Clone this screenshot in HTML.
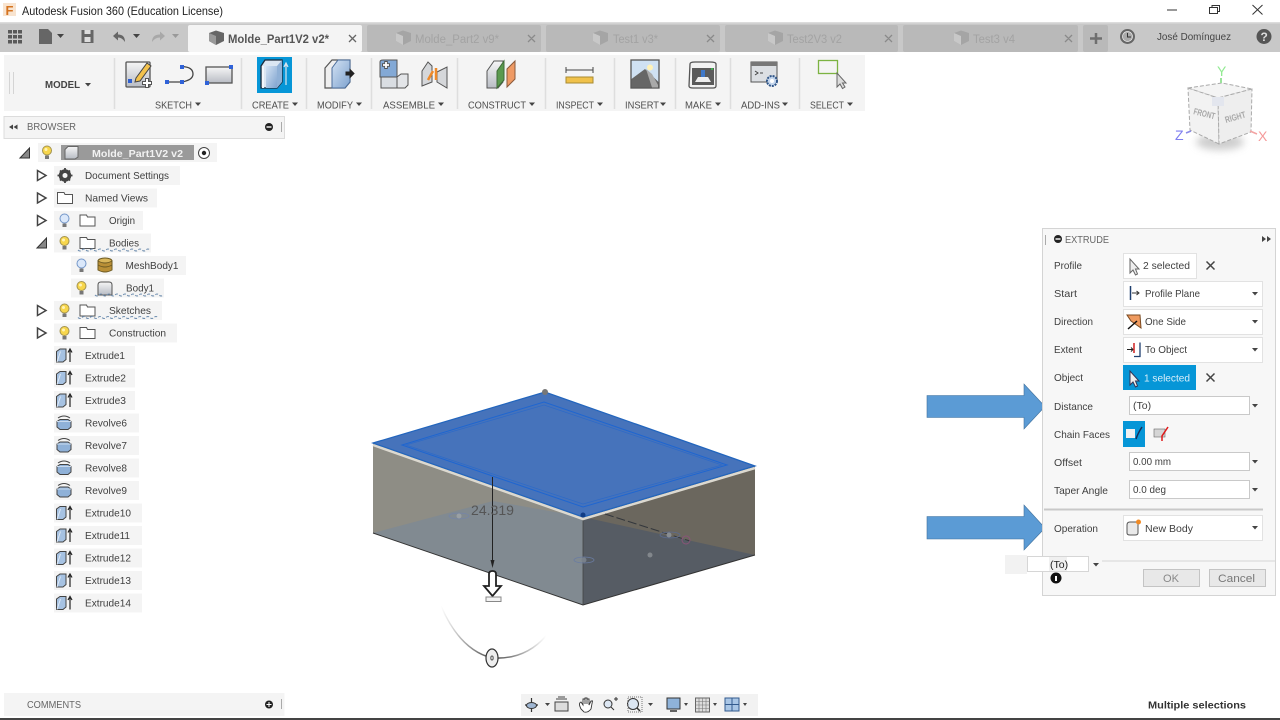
<!DOCTYPE html>
<html lang="en"><head><meta charset="utf-8"><title>Autodesk Fusion 360</title>
<style>
html,body{margin:0;padding:0;background:#fff;width:1280px;height:720px;overflow:hidden}
svg{display:block;position:absolute;left:0;top:0;filter:blur(.35px)}
text{font-family:"Liberation Sans",sans-serif;font-size:10.5px;fill:#3f3f3f}
.r{fill:#f4f4f4}
.t{fill:#a3a3a3;font-size:11.5px}
.x{stroke:#8a8a8a;stroke-width:1.3;fill:none}
.rl{font-size:10.5px;fill:#4d4d4d}
.sep{stroke:#dedede;stroke-width:1.5}
.car{fill:#444}
.f{fill:#fff;stroke:#e2e2e2}
.exp{fill:#fff;stroke:#444;stroke-width:1.5}
.sq{fill:none;stroke:#6c8cae;stroke-width:1.1;stroke-dasharray:3 1.5}
.ib{fill:#fff;stroke:#c9c9c9}
</style></head><body>
<svg width="1280" height="720" viewBox="0 0 1280 720" xmlns="http://www.w3.org/2000/svg">
<defs>
<linearGradient id="bl" x1="0" y1="0" x2="1" y2="1"><stop offset="0" stop-color="#d3e2f3"/><stop offset="1" stop-color="#7fa3cf"/></linearGradient>
<linearGradient id="gr" x1="0" y1="0" x2="0" y2="1"><stop offset="0" stop-color="#f6f6f6"/><stop offset="1" stop-color="#b8bcc4"/></linearGradient>
<linearGradient id="arc" x1="0" y1="0" x2="1" y2="0"><stop offset="0" stop-color="#fff"/><stop offset=".5" stop-color="#444"/><stop offset="1" stop-color="#fff"/></linearGradient>
<filter id="sh" x="-30%" y="-60%" width="160%" height="220%"><feGaussianBlur stdDeviation="4"/></filter>
<g id="by"><circle cx="0" cy="-2.500" r="4.500" fill="#f7d64c" stroke="#a39350"/><circle cx="-1" cy="-3.500" r="1.500" fill="#fff3b5"/><rect x="-2" y="2.500" width="4" height="3.500" fill="#777"/></g>
<g id="bb"><circle cx="0" cy="-2.500" r="4.500" fill="#dbe8fa" stroke="#7396c8"/><rect x="-2" y="2.500" width="4" height="3.500" fill="#777"/></g>
<g id="fo"><path d="M-7.500 -5.500H-1L0 -3.500H7.500V5.500H-7.500Z" fill="#fff" stroke="#555"/></g>
<g id="ex"><path d="M-7.500 -4L-4 -6.500H2V4L-1 6.500H-7.500Z" fill="#a6c2e2" stroke="#444"/><path d="M-3.500 -4L-7 6.500" stroke="#dfe9f5" fill="none"/><path d="M6 6.500V-5M4 -3L6 -6.500L8 -3" stroke="#222" stroke-width="1.200" fill="none"/></g>
<g id="re"><path d="M-7 -1.500L-4 -3.500H4L7 -1.500V4L4 6.500H-4L-7 4Z" fill="#8fb1d8" stroke="#444"/><path d="M-7 -1.500H7" stroke="#c9daee"/><path d="M-6 -5Q0 -9 6 -5" stroke="#444" fill="none"/></g>
</defs>

<!-- title bar -->
<rect x="3" y="3" width="13" height="13" fill="#f8e4d0"/>
<text x="5.500" y="15" style="font-size:13px;font-weight:bold;fill:#d5731f">F</text>
<text x="22" y="15" textLength="201" lengthAdjust="spacingAndGlyphs" style="font-size:12px;fill:#222">Autodesk Fusion 360 (Education License)</text>
<path d="M1167 10H1177" stroke="#333" stroke-width="1"/>
<path d="M1209.500 7.500H1217.500V13.500H1209.500ZM1212 7.500V5.500H1219.500V11.500H1217.500" fill="none" stroke="#333"/>
<path d="M1252.500 5L1262.500 14.500M1262.500 5L1252.500 14.500" stroke="#333" stroke-width="1"/>

<!-- tab bar -->
<rect x="0" y="22" width="1280" height="30" fill="#c8c8c8"/>
<rect x="0" y="22" width="1280" height="1.500" fill="#dcdcdc"/>
<rect x="188" y="25" width="174" height="27" rx="2" fill="#f4f4f4"/>
<rect x="367" y="25" width="174" height="27" rx="2" fill="#b9b9b9"/>
<rect x="546" y="25" width="174" height="27" rx="2" fill="#b9b9b9"/>
<rect x="725" y="25" width="173" height="27" rx="2" fill="#b9b9b9"/>
<rect x="903" y="25" width="175" height="27" rx="2" fill="#b9b9b9"/>
<rect x="1083" y="25" width="25" height="27" rx="2" fill="#b9b9b9"/>
<path d="M1090 38.500H1102M1096 33V44" stroke="#6f6f6f" stroke-width="2.500"/>
<g fill="#595959"><rect x="8" y="30" width="4" height="3.500"/><rect x="13" y="30" width="4" height="3.500"/><rect x="18" y="30" width="4" height="3.500"/><rect x="8" y="35" width="4" height="3.500"/><rect x="13" y="35" width="4" height="3.500"/><rect x="18" y="35" width="4" height="3.500"/><rect x="8" y="40" width="4" height="3.500"/><rect x="13" y="40" width="4" height="3.500"/><rect x="18" y="40" width="4" height="3.500"/></g>
<path d="M39 29H48L52 33V44H39Z" fill="#666"/><path class="car" d="M57 34H64L60.500 38Z"/>
<path d="M81.500 30H93.500V43H81.500Z" fill="#666"/><rect x="84.500" y="30" width="6" height="4" fill="#ddd"/><rect x="84.500" y="37" width="6" height="5" fill="#ddd"/>
<path d="M113 36L118 31.500V34.500Q125 34.500 125 42Q122 37.500 118 37.500V40.500Z" fill="#666"/><path class="car" d="M133 34H140L136.500 38Z"/>
<path d="M165 36L160 31.500V34.500Q152 34.500 152 42Q155 37.500 160 37.500V40.500Z" fill="#a8a8a8"/><path d="M172 34H179L175.500 38Z" fill="#999"/>
<path d="M209 33L216 30.500L224 33V41L216 45L209 41Z" fill="#666"/><path d="M209 33L216 36V45L209 41Z" fill="#999"/>
<text x="228" y="43" textLength="101" lengthAdjust="spacingAndGlyphs" style="font-size:11.500px;font-weight:bold;fill:#555">Molde_Part1V2 v2*</text>
<path d="M349 35L356 42M356 35L349 42" stroke="#666" stroke-width="1.300"/>
<g fill="#a5a5a5"><path d="M396 33L403 30.500L411 33V41L403 45L396 41Z"/><path d="M593 33L600 30.500L608 33V41L600 45L593 41Z"/><path d="M768 33L775 30.500L783 33V41L775 45L768 41Z"/><path d="M954 33L961 30.500L969 33V41L961 45L954 41Z"/></g>
<g fill="#c8c8c8"><path d="M396 33L403 36V45L396 41Z"/><path d="M593 33L600 36V45L593 41Z"/><path d="M768 33L775 36V45L768 41Z"/><path d="M954 33L961 36V45L954 41Z"/></g>
<text class="t" x="415" y="43" textLength="84" lengthAdjust="spacingAndGlyphs">Molde_Part2 v9*</text>
<text class="t" x="613" y="43" textLength="45" lengthAdjust="spacingAndGlyphs">Test1 v3*</text>
<text class="t" x="787" y="43" textLength="55" lengthAdjust="spacingAndGlyphs">Test2V3 v2</text>
<text class="t" x="973" y="43" textLength="42" lengthAdjust="spacingAndGlyphs">Test3 v4</text>
<path class="x" d="M528 35L535 42M535 35L528 42M707 35L714 42M714 35L707 42M885 35L892 42M892 35L885 42M1065 35L1072 42M1072 35L1065 42"/>
<circle cx="1127.500" cy="36.500" r="7.500" fill="#666"/><circle cx="1127.500" cy="36.500" r="5" fill="#aaa" stroke="#eee" stroke-width=".7"/><path d="M1127.500 33V37H1131" stroke="#333" fill="none"/>
<text x="1157" y="40" textLength="74" lengthAdjust="spacingAndGlyphs" style="font-size:10.500px;fill:#444">José Domínguez</text>
<circle cx="1264" cy="36.500" r="7.500" fill="#555"/><text x="1260.500" y="41" style="font-size:12px;font-weight:bold;fill:#ddd">?</text>

<!-- ribbon -->
<rect x="4" y="55" width="861" height="56" fill="#f4f4f4"/>
<path d="M9.500 72V94M13.500 72V94" stroke="#d4d4d4"/>
<text x="45" y="88" textLength="35" lengthAdjust="spacingAndGlyphs" style="font-weight:bold;fill:#444;font-size:10.500px">MODEL</text><path class="car" d="M85 83H91L88 86.500Z"/>
<path class="sep" d="M114.500 58V109M241.500 58V109M306.500 58V109M371.500 58V109M457.500 58V109M545.500 58V109M614.500 58V109M675.500 58V109M730.500 58V109M799.500 58V109"/>
<text class="rl" x="155" y="108.500" textLength="37" lengthAdjust="spacingAndGlyphs">SKETCH</text>
<text class="rl" x="252" y="108.500" textLength="37" lengthAdjust="spacingAndGlyphs">CREATE</text>
<text class="rl" x="317" y="108.500" textLength="36" lengthAdjust="spacingAndGlyphs">MODIFY</text>
<text class="rl" x="383" y="108.500" textLength="52" lengthAdjust="spacingAndGlyphs">ASSEMBLE</text>
<text class="rl" x="468" y="108.500" textLength="58" lengthAdjust="spacingAndGlyphs">CONSTRUCT</text>
<text class="rl" x="556" y="108.500" textLength="38" lengthAdjust="spacingAndGlyphs">INSPECT</text>
<text class="rl" x="625" y="108.500" textLength="34" lengthAdjust="spacingAndGlyphs">INSERT</text>
<text class="rl" x="685" y="108.500" textLength="27" lengthAdjust="spacingAndGlyphs">MAKE</text>
<text class="rl" x="741" y="108.500" textLength="39" lengthAdjust="spacingAndGlyphs">ADD-INS</text>
<text class="rl" x="810" y="108.500" textLength="34" lengthAdjust="spacingAndGlyphs">SELECT</text>
<path class="car" d="M195 102.500H201L198 106ZM292 102.500H298L295 106ZM356 102.500H362L359 106ZM438 102.500H444L441 106ZM529 102.500H535L532 106ZM597 102.500H603L600 106ZM660 102.500H666L663 106ZM715 102.500H721L718 106ZM782 102.500H788L785 106ZM847 102.500H853L850 106Z"/>

<!-- sketch icons -->
<rect x="126" y="62" width="24" height="25" rx="1" fill="url(#gr)" stroke="#555" stroke-width="1.300"/>
<path d="M136 78L147 63L151 66L140 81L135 82Z" fill="#f3c24d" stroke="#444"/>
<rect x="128" y="79" width="4" height="4" fill="#2f5fd0"/>
<path d="M147 78V88M142 83H152" stroke="#555" stroke-width="4"/><path d="M147 79V87M143 83H151" stroke="#fff" stroke-width="2"/>
<path d="M167 82H182Q193 80 193 74Q193 67 182 66.500" fill="none" stroke="#444" stroke-width="1.300"/>
<g fill="#2f62d8"><rect x="165" y="80" width="4" height="4"/><rect x="180" y="80" width="4" height="4"/><rect x="180" y="65" width="4" height="4"/></g>
<rect x="206" y="67" width="26" height="16" fill="url(#gr)" stroke="#555" stroke-width="1.300"/>
<g fill="#2f62d8"><rect x="229" y="65" width="4" height="4"/><rect x="205" y="81" width="4" height="4"/></g>
<!-- create -->
<rect x="257" y="57" width="35" height="36" fill="#0696d7"/>
<path d="M261 66L265 60H282V82L277 88H261Z" fill="#dbe6f2" stroke="#1c2a3a" stroke-width="1.300"/>
<path d="M266 66H277V88H266Z" fill="url(#bl)"/>
<path d="M277 66L282 60V82L277 88Z" fill="#8fb0d6"/>
<path d="M263 66V88" stroke="#f2f6fb" stroke-width="2"/>
<path d="M286 85V64M284 67L286 63L288 67" stroke="#d9e4ee" stroke-width="1.200" fill="none"/>
<!-- modify -->
<path d="M325 68L332 60H350V82L345 88H325Z" fill="#efefef" stroke="#555" stroke-width="1.200"/>
<path d="M332 68L338 60H350V82L345 88H332Z" fill="url(#bl)" stroke="#4c6e9c" stroke-width="1"/>
<path d="M350 72V69.500L354 73.500L350 77.500V75H346V72Z" fill="#222" stroke="#222"/>
<!-- assemble -->
<path d="M380 77V62Q380 60 383 60H397V77Z" fill="#83a9d6" stroke="#555"/>
<path d="M381 77H397V88H381Z" fill="#d9dde2" stroke="#555"/><path d="M397 77L401 74H408V85L405 88H397Z" fill="#e3e5e8" stroke="#555"/>
<path d="M386 61V69M382 65H390" stroke="#555" stroke-width="3.500"/><path d="M386 62V68M383 65H389" stroke="#fff" stroke-width="1.800"/>
<path d="M422 86V71L428 62L432 66V82ZM437 72L447 67V88L437 82Z" fill="#d5d7da" stroke="#555"/><path d="M428 80L433 71M436 68V80" stroke="#ee8a2a" stroke-width="2.500"/>
<!-- construct -->
<path d="M487 71L494 61H503V82L498 88H487Z" fill="url(#gr)" stroke="#555"/>
<path d="M497 71L504 61V80L497 88Z" fill="#5b9a4f" stroke="#3f6b38"/>
<path d="M507 87V69L515 61V79Z" fill="#ef9a64" stroke="#8a5a3b"/>
<!-- inspect -->
<path d="M566 70H593M566 67V73M593 67V73" stroke="#444"/>
<rect x="566" y="77" width="27" height="6" fill="#f0c14a" stroke="#a88a32"/>
<!-- insert -->
<rect x="631" y="60" width="28" height="28" fill="#cfe1f3" stroke="#555" stroke-width="1.300"/>
<path d="M631.500 87.500V79L645 69L658.500 82V87.500Z" fill="#666"/><path d="M646 69L652 74L658 85V87.500H652Z" fill="#a9a9a9"/><circle cx="650" cy="67.500" r="3" fill="#fff2b8"/>
<!-- make -->
<path d="M690 64Q690 62 695 62H710Q716 62 716 64V86Q716 88 713 88H693Q689 88 689 86Z" fill="#f2f2f2" stroke="#555" stroke-width="1.300"/>
<rect x="692" y="68" width="22" height="17" fill="#5a5a5a"/><path d="M695 82L698 77H708L711 82Z" fill="#eee"/><rect x="701" y="70" width="4" height="7" fill="#3f78c8"/><rect x="711" y="68" width="2" height="2" fill="#3fb04f"/>
<!-- add-ins -->
<rect x="751" y="62" width="26" height="20" fill="#dcdfe3" stroke="#555"/><rect x="751" y="62" width="26" height="4" fill="#777"/>
<path d="M755 71L758 73L755 75M760 73H763" stroke="#444" fill="none"/>
<circle cx="772" cy="81" r="5" fill="#c5d7ee" stroke="#2f5588" stroke-width="2" stroke-dasharray="2 1"/><circle cx="772" cy="81" r="2" fill="#fff"/>
<!-- select -->
<rect x="818.500" y="60.500" width="19" height="13" fill="none" stroke="#7cb342" stroke-width="1.300"/>
<path d="M837 73V87L840 84L842.500 88.500L845 87L842.500 83H846Z" fill="#ddd" stroke="#666"/>

<!-- browser -->
<rect x="4" y="116.500" width="280.500" height="22" fill="#f4f4f4" stroke="#dcdcdc"/>
<path class="car" d="M9 127L13 124.500V129.500ZM13.500 127L17.500 124.500V129.500Z"/>
<text x="27" y="130" textLength="49" lengthAdjust="spacingAndGlyphs" style="fill:#666">BROWSER</text>
<circle cx="269" cy="127" r="4" fill="#222"/><rect x="266.500" y="126.300" width="5" height="1.400" fill="#fff"/>
<path d="M281.500 122V132" stroke="#aaa"/>

<g>
<rect class="r" x="38" y="143" width="179" height="19"/>
<rect class="r" x="54" y="166" width="126" height="19"/>
<rect class="r" x="54" y="188.500" width="103" height="19"/>
<rect class="r" x="54" y="211" width="89" height="19"/>
<rect class="r" x="54" y="233.500" width="97" height="19"/>
<rect class="r" x="71" y="256" width="115" height="19"/>
<rect class="r" x="71" y="278.500" width="93" height="19"/>
<rect class="r" x="54" y="301" width="108" height="19"/>
<rect class="r" x="54" y="323.500" width="123" height="19"/>
<rect class="r" x="54" y="346" width="81" height="19"/>
<rect class="r" x="54" y="368.500" width="81" height="19"/>
<rect class="r" x="54" y="391" width="81" height="19"/>
<rect class="r" x="54" y="413.500" width="85" height="19"/>
<rect class="r" x="54" y="436" width="85" height="19"/>
<rect class="r" x="54" y="458.500" width="85" height="19"/>
<rect class="r" x="54" y="481" width="85" height="19"/>
<rect class="r" x="54" y="503.500" width="88" height="19"/>
<rect class="r" x="54" y="526" width="88" height="19"/>
<rect class="r" x="54" y="548.500" width="88" height="19"/>
<rect class="r" x="54" y="571" width="88" height="19"/>
<rect class="r" x="54" y="593.500" width="88" height="19"/>
</g>
<!-- root -->
<path d="M20 158L29.500 148V158Z" fill="#888" stroke="#333"/>
<use href="#by" x="47" y="153"/>
<rect x="61" y="145" width="133" height="15" fill="#9a9a9a"/>
<path d="M65 149.500L68 146.500H78V157L75 159H65Z" fill="url(#gr)" stroke="#666"/>
<text x="92" y="157" textLength="91" lengthAdjust="spacingAndGlyphs" style="font-weight:bold;fill:#f2f2f2">Molde_Part1V2 v2</text>
<circle cx="204" cy="153" r="5.500" fill="#fff" stroke="#444"/><circle cx="204" cy="153" r="2.200" fill="#222"/>
<!-- expanders -->
<path class="exp" d="M37.500 170.500L46 175.500L37.500 180.500Z"/>
<path class="exp" d="M37.500 193L46 198L37.500 203Z"/>
<path class="exp" d="M37.500 215.500L46 220.500L37.500 225.500Z"/>
<path d="M37 248L46.500 238V248Z" fill="#888" stroke="#333"/>
<path class="exp" d="M37.500 305.500L46 310.500L37.500 315.500Z"/>
<path class="exp" d="M37.500 328L46 333L37.500 338Z"/>
<!-- icons -->
<circle cx="65" cy="175.500" r="4.500" fill="none" stroke="#444" stroke-width="3.500"/>
<path d="M65 168V183M57.500 175.500H72.500M60 170.500L70 180.500M70 170.500L60 180.500" stroke="#444" stroke-width="1.800"/><circle cx="65" cy="175.500" r="2.500" fill="#f4f4f4"/>
<use href="#fo" x="65" y="198"/>
<use href="#bb" x="64.500" y="221"/><use href="#fo" x="87.500" y="220.500"/>
<use href="#by" x="64.500" y="243.500"/><use href="#fo" x="87.500" y="243"/>
<use href="#bb" x="81.500" y="266"/>
<g><ellipse cx="105" cy="261" rx="7" ry="3" fill="#d9b65a" stroke="#6d5a22"/><path d="M98 261V270Q105 274 112 270V261Q105 265 98 261Z" fill="#b98f36" stroke="#6d5a22"/><path d="M98 265Q105 269 112 265" stroke="#6d5a22" fill="none"/></g>
<use href="#by" x="81.500" y="288.500"/>
<path d="M98 295V285Q98 282 101 282H109Q112 282 112 285V295Z" fill="url(#gr)" stroke="#555"/>
<use href="#by" x="64.500" y="311"/><use href="#fo" x="87.500" y="310.500"/>
<use href="#by" x="64.500" y="333.500"/><use href="#fo" x="87.500" y="333"/>
<path class="sq" d="M78 250q2 2 4 0t4 0t4 0t4 0t4 0t4 0t4 0t4 0t4 0t4 0t4 0t4 0t4 0t4 0t4 0t4 0t4 0t4 0"/>
<path class="sq" d="M95 295q2 2 4 0t4 0t4 0t4 0t4 0t4 0t4 0t4 0t4 0t4 0t4 0t4 0t4 0t4 0t4 0t4 0t4 0"/>
<path class="sq" d="M78 317.500q2 2 4 0t4 0t4 0t4 0t4 0t4 0t4 0t4 0t4 0t4 0t4 0t4 0t4 0t4 0t4 0t4 0t4 0t4 0t4 0t4 0"/>
<use href="#ex" x="64" y="355.500"/><use href="#ex" x="64" y="378"/><use href="#ex" x="64" y="400.500"/>
<use href="#re" x="64" y="423"/><use href="#re" x="64" y="445.500"/><use href="#re" x="64" y="468"/><use href="#re" x="64" y="490.500"/>
<use href="#ex" x="64" y="513"/><use href="#ex" x="64" y="535.500"/><use href="#ex" x="64" y="558"/><use href="#ex" x="64" y="580.500"/><use href="#ex" x="64" y="603"/>
<!-- labels -->
<text x="85" y="179" textLength="84" lengthAdjust="spacingAndGlyphs">Document Settings</text>
<text x="85" y="201.500" textLength="63" lengthAdjust="spacingAndGlyphs">Named Views</text>
<text x="109" y="224" textLength="26" lengthAdjust="spacingAndGlyphs">Origin</text>
<text x="109" y="246.500" textLength="30" lengthAdjust="spacingAndGlyphs">Bodies</text>
<text x="125.500" y="269" textLength="53" lengthAdjust="spacingAndGlyphs">MeshBody1</text>
<text x="126" y="291.500" textLength="28" lengthAdjust="spacingAndGlyphs">Body1</text>
<text x="109" y="314" textLength="42" lengthAdjust="spacingAndGlyphs">Sketches</text>
<text x="109" y="336.500" textLength="57" lengthAdjust="spacingAndGlyphs">Construction</text>
<text x="85" y="359" textLength="40" lengthAdjust="spacingAndGlyphs">Extrude1</text>
<text x="85" y="381.500" textLength="41" lengthAdjust="spacingAndGlyphs">Extrude2</text>
<text x="85" y="404" textLength="41" lengthAdjust="spacingAndGlyphs">Extrude3</text>
<text x="85" y="426.500" textLength="42" lengthAdjust="spacingAndGlyphs">Revolve6</text>
<text x="85" y="449" textLength="42" lengthAdjust="spacingAndGlyphs">Revolve7</text>
<text x="85" y="471.500" textLength="42" lengthAdjust="spacingAndGlyphs">Revolve8</text>
<text x="85" y="494" textLength="42" lengthAdjust="spacingAndGlyphs">Revolve9</text>
<text x="85" y="516.500" textLength="46" lengthAdjust="spacingAndGlyphs">Extrude10</text>
<text x="85" y="539" textLength="45" lengthAdjust="spacingAndGlyphs">Extrude11</text>
<text x="85" y="561.500" textLength="46" lengthAdjust="spacingAndGlyphs">Extrude12</text>
<text x="85" y="584" textLength="46" lengthAdjust="spacingAndGlyphs">Extrude13</text>
<text x="85" y="606.500" textLength="46" lengthAdjust="spacingAndGlyphs">Extrude14</text>

<!-- model -->
<path d="M373 443L583 517V605L373 533Z" fill="#8e8d85"/>
<path d="M583 517L755 466V555L583 605Z" fill="#6b675e"/>
<path d="M373 533L493 501L583 517V605Z" fill="#818a91"/>
<path d="M583 517L755 555L583 605Z" fill="#565c64"/>
<path d="M373 533L583 605L755 555" fill="none" stroke="#333" stroke-width="1"/>
<path d="M583 517V605" stroke="#444" stroke-width=".8"/>
<path d="M373 445L583 519L755 468" fill="none" stroke="#dcd9d0" stroke-width="2.500"/>
<path d="M373 443L545 392L755 466L583 517Z" fill="#4673bb" stroke="#2265bd" stroke-width="1.200"/>
<path d="M402 445L544 402L727 465L583 507Z" fill="none" stroke="#1f66d0" stroke-width="1"/>
<path d="M406 445L544 405L722 465L583 504Z" fill="none" stroke="#2d6ac8" stroke-width=".7"/>
<circle cx="545" cy="392" r="3" fill="#777"/><circle cx="583" cy="515" r="2.500" fill="#123d85"/>
<path d="M605 514L690 541" stroke="#33373c" stroke-width="1" stroke-dasharray="9 3"/>
<ellipse cx="459" cy="516" rx="10" ry="3" fill="none" stroke="#7585a8" stroke-width=".8"/><circle cx="459" cy="516" r="2.500" fill="#9aa0a4"/>
<ellipse cx="584" cy="560" rx="10" ry="3" fill="none" stroke="#6a7ca2" stroke-width=".8"/><circle cx="584" cy="560" r="2.500" fill="#78808a"/>
<ellipse cx="670" cy="535" rx="10" ry="3" fill="none" stroke="#5c6c90" stroke-width=".8"/><circle cx="669" cy="535" r="2.500" fill="#888d92"/>
<circle cx="650" cy="555" r="2.500" fill="#82878c"/>
<circle cx="686" cy="540" r="4" fill="none" stroke="#8a5478"/>
<path d="M492.500 477V566" stroke="#222" stroke-width="1"/>
<path d="M490.500 560L492.500 568L494.500 560Z" fill="#222"/>
<text x="471" y="515" textLength="43" lengthAdjust="spacingAndGlyphs" style="font-size:14px;fill:#555">24.319</text>
<path d="M489 574Q489 571 492.500 571Q496 571 496 574V586H501L492.500 596L484 586H489Z" fill="#fff" stroke="#222" stroke-width="1.800"/>
<rect x="486" y="597" width="15" height="4.500" fill="#f3f3f3" stroke="#888"/>
<path d="M441 606Q460 650 492 658Q525 660 546 636" fill="none" stroke="url(#arc)" stroke-width="1.500"/>
<ellipse cx="492" cy="658" rx="6" ry="9" fill="#eee" stroke="#333" stroke-width="1.200"/><ellipse cx="492" cy="658" rx="1.200" ry="2" fill="none" stroke="#555"/>

<!-- viewcube -->
<ellipse cx="1220" cy="142" rx="24" ry="8" fill="#b8b8b8" opacity=".7" filter="url(#sh)"/>
<path d="M1188 88L1222 83L1252 89L1218 98Z" fill="#f4f4f4" stroke="#aaa" stroke-dasharray="4 2"/>
<path d="M1188 88L1218 98L1219 144L1190 130Z" fill="#f2f2f2" stroke="#aaa" stroke-dasharray="4 2"/>
<path d="M1252 89L1218 98L1219 144L1251 132Z" fill="#eeeeee" stroke="#aaa" stroke-dasharray="4 2"/>
<rect x="1212" y="97" width="12" height="9" fill="#e3e6ee"/>
<text transform="translate(1193,114) rotate(14)" textLength="22" lengthAdjust="spacingAndGlyphs" style="font-size:9px;font-weight:bold;fill:#a8a8a8">FRONT</text>
<text transform="translate(1226,123) rotate(-16)" textLength="21" lengthAdjust="spacingAndGlyphs" style="font-size:9px;font-weight:bold;fill:#a8a8a8">RIGHT</text>
<path d="M1221 78V83" stroke="#9be29b" stroke-width="2"/>
<text x="1217" y="76" style="font-size:14px;fill:#92ea92">Y</text>
<path d="M1186 133L1191 131" stroke="#8a8ae8" stroke-width="1.500"/>
<text x="1175" y="140" style="font-size:14px;fill:#7e7ef0">Z</text>
<path d="M1250 131L1257 134" stroke="#f3a3a3" stroke-width="1.500"/>
<text x="1258" y="141" style="font-size:14px;fill:#f59a9a">X</text>

<!-- callout arrows -->
<path d="M927 395.500H1024V384L1045 406.500L1024 429V417.500H927Z" fill="#5b9bd5" stroke="#41719c" stroke-width=".6"/>
<path d="M927 516.500H1024V505L1045 528L1024 550V539H927Z" fill="#5b9bd5" stroke="#41719c" stroke-width=".6"/>

<!-- dialog -->
<rect x="1042.500" y="228.500" width="233" height="367" fill="#f7f7f7" stroke="#d4d4d4"/>
<path d="M1045.500 235V245" stroke="#aaa"/>
<circle cx="1058" cy="239" r="4" fill="#222"/><rect x="1055.500" y="238.300" width="5" height="1.400" fill="#fff"/>
<text x="1065" y="243" textLength="44" lengthAdjust="spacingAndGlyphs" style="fill:#666">EXTRUDE</text>
<path class="car" d="M1262 236L1266 239L1262 242ZM1267 236L1271 239L1267 242Z"/>
<text x="1054" y="269" textLength="28" lengthAdjust="spacingAndGlyphs">Profile</text>
<text x="1054" y="297" textLength="23" lengthAdjust="spacingAndGlyphs">Start</text>
<text x="1054" y="325" textLength="39" lengthAdjust="spacingAndGlyphs">Direction</text>
<text x="1054" y="353" textLength="28" lengthAdjust="spacingAndGlyphs">Extent</text>
<text x="1054" y="381" textLength="29" lengthAdjust="spacingAndGlyphs">Object</text>
<text x="1054" y="410" textLength="39" lengthAdjust="spacingAndGlyphs">Distance</text>
<text x="1054" y="438" textLength="56" lengthAdjust="spacingAndGlyphs">Chain Faces</text>
<text x="1054" y="466" textLength="28" lengthAdjust="spacingAndGlyphs">Offset</text>
<text x="1054" y="494" textLength="54" lengthAdjust="spacingAndGlyphs">Taper Angle</text>
<text x="1054" y="532" textLength="44" lengthAdjust="spacingAndGlyphs">Operation</text>
<rect class="f" x="1123.500" y="253.500" width="73" height="25"/>
<path d="M1130 259V273L1133 270L1135.500 275L1137.500 274L1135.500 269H1139Z" fill="#eee" stroke="#666"/>
<text x="1143" y="269" textLength="47" lengthAdjust="spacingAndGlyphs">2 selected</text>
<path d="M1206.500 261.500L1214.500 269.500M1214.500 261.500L1206.500 269.500" stroke="#444" stroke-width="1.500"/>
<rect class="f" x="1123.500" y="281.500" width="139" height="25"/>
<path d="M1130.500 286V300" stroke="#1f3f6f" stroke-width="1.500"/><path d="M1132 293H1139M1136.500 291L1139 293L1136.500 295" stroke="#333" fill="none"/>
<text x="1145" y="297" textLength="55" lengthAdjust="spacingAndGlyphs">Profile Plane</text>
<path class="car" d="M1252 292H1258L1255 295.500Z"/>
<rect class="f" x="1123.500" y="309.500" width="139" height="25"/>
<path d="M1127 315H1140L1141 328L1131 321Z" fill="#ef9a5f" stroke="#7a4a22"/><path d="M1128 329L1137 321" stroke="#111" stroke-width="1.500"/>
<text x="1145" y="325" textLength="41" lengthAdjust="spacingAndGlyphs">One Side</text>
<path class="car" d="M1252 320H1258L1255 323.500Z"/>
<rect class="f" x="1123.500" y="337.500" width="139" height="25"/>
<path d="M1127 349.500H1133M1131 347.500L1133 349.500L1131 351.500" stroke="#222" fill="none"/><path d="M1134 343V353" stroke="#d02020" stroke-width="1.500"/><path d="M1134 356.500H1140V342.500" stroke="#1f3f6f" stroke-width="1.300" fill="none"/>
<text x="1145" y="353" textLength="42" lengthAdjust="spacingAndGlyphs">To Object</text>
<path class="car" d="M1252 348H1258L1255 351.500Z"/>
<rect x="1123" y="365" width="73" height="25" fill="#0696d7"/>
<path d="M1130 371V385L1133 382L1135.500 387L1137.500 386L1135.500 381H1139Z" fill="#eee" stroke="#335"/>
<text x="1144" y="381.500" textLength="46" lengthAdjust="spacingAndGlyphs" style="fill:#d8eefa">1 selected</text>
<path d="M1206.500 373.500L1214.500 381.500M1214.500 373.500L1206.500 381.500" stroke="#444" stroke-width="1.500"/>
<rect class="ib" x="1129.500" y="396.500" width="120" height="18"/>
<text x="1133" y="409">(To)</text>
<path class="car" d="M1252 404H1258L1255 407.500Z"/>
<rect x="1123" y="421" width="22" height="26" fill="#0696d7"/>
<rect x="1126" y="429" width="9" height="9" fill="#f1f1f1"/><path d="M1136 439Q1138 433 1142 427" stroke="#1a2c55" stroke-width="1.500" fill="none"/>
<rect x="1154" y="429" width="11" height="8" fill="#d5d5d5" stroke="#666" stroke-width=".6"/><path d="M1162 441V436L1168 427" stroke="#e01818" stroke-width="1.500" fill="none"/>
<rect class="ib" x="1129.500" y="452.500" width="120" height="18"/>
<text x="1133" y="465" textLength="38" lengthAdjust="spacingAndGlyphs">0.00 mm</text>
<path class="car" d="M1252 460H1258L1255 463.500Z"/>
<rect class="ib" x="1129.500" y="480.500" width="120" height="18"/>
<text x="1133" y="493" textLength="33" lengthAdjust="spacingAndGlyphs">0.0 deg</text>
<path class="car" d="M1252 488H1258L1255 491.500Z"/>
<path d="M1044 509.500H1263" stroke="#c8c8c8" stroke-width="2"/>
<rect class="f" x="1123.500" y="515.500" width="139" height="25"/>
<path d="M1127 525Q1127 522 1130 522H1138V533Q1138 535 1135 535H1130Q1127 535 1127 533Z" fill="#e9e9e9" stroke="#555"/><circle cx="1138.500" cy="522" r="2.500" fill="#f08a24"/>
<text x="1145" y="532" textLength="48" lengthAdjust="spacingAndGlyphs">New Body</text>
<path class="car" d="M1252 526H1258L1255 529.500Z"/>
<!-- floating input -->
<path d="M1102 561H1276" stroke="#d4d4d4"/>
<rect x="1005" y="555" width="22" height="19" fill="#f2f2f2"/>
<rect x="1027.500" y="556.500" width="61" height="15" fill="#fff" stroke="#d6d6d6"/>
<rect x="1049" y="557" width="18" height="14" fill="#f0f0f0"/>
<text x="1050" y="568" style="fill:#222">(To)</text>
<path class="car" d="M1093 563H1099L1096 566.500Z"/>
<circle cx="1056" cy="578" r="5.500" fill="#111"/><rect x="1055" y="576" width="2" height="5" fill="#fff"/>
<rect x="1143.500" y="569.500" width="56" height="17" fill="#e8e8e8" stroke="#c4c4c4"/>
<text x="1163" y="582" textLength="16" lengthAdjust="spacingAndGlyphs" style="font-size:11px;fill:#888">OK</text>
<rect x="1209.500" y="569.500" width="56" height="17" fill="#e8e8e8" stroke="#c4c4c4"/>
<text x="1218" y="582" textLength="37" lengthAdjust="spacingAndGlyphs" style="font-size:11px;fill:#777">Cancel</text>

<!-- comments -->
<rect x="4" y="693" width="280.500" height="23" fill="#f4f4f4"/>
<text x="27" y="708" textLength="54" lengthAdjust="spacingAndGlyphs" style="fill:#666">COMMENTS</text>
<circle cx="269" cy="704.500" r="4" fill="#222"/><path d="M266.500 704.500H271.500M269 702V707" stroke="#fff"/>
<path d="M281.500 699V709" stroke="#aaa"/>

<!-- nav bar -->
<rect x="521" y="694" width="237" height="22" fill="#f2f2f2"/>
<path d="M531.500 698V712M525 705H538" stroke="#333" stroke-width="1.200"/><ellipse cx="531.500" cy="705.500" rx="5" ry="3" fill="#9fb6d2" stroke="#333"/>
<path class="car" d="M545 703H550L547.500 706Z"/>
<rect x="555" y="702" width="13" height="9" fill="#ddd" stroke="#444"/><path d="M556 699H567M558 697H565" stroke="#444"/>
<path d="M581 709Q578 703 581 702L583 705V699H585V704V698H587V704V699H589V705L591 701H592.500L591 709Q588 713 584 712Z" fill="#fff" stroke="#333" stroke-width=".9"/>
<circle cx="608" cy="704" r="4" fill="#dce6f2" stroke="#333"/><path d="M611 707L614 710M614 699H618M616 697V701" stroke="#333"/>
<circle cx="633" cy="704" r="5.500" fill="#dce6f2" stroke="#333"/><path d="M637 708L640 711" stroke="#333" stroke-width="1.500"/><rect x="628" y="697" width="14" height="15" fill="none" stroke="#777" stroke-dasharray="1 1"/>
<path class="car" d="M648 703H653L650.500 706Z"/>
<rect x="667" y="698" width="13" height="11" fill="#8fb3da" stroke="#333"/><path d="M670 711H677" stroke="#333" stroke-width="1.500"/>
<path class="car" d="M684 703H688L686 706Z"/>
<rect x="695.500" y="698" width="14" height="14" fill="#ddd" stroke="#666"/><path d="M699 698V712M702.500 698V712M706 698V712M695.500 701.500H709.500M695.500 705H709.500M695.500 708.500H709.500" stroke="#777" stroke-width=".6"/>
<path class="car" d="M713 703H717L715 706Z"/>
<rect x="725" y="698" width="14" height="13" fill="#a9c6e6" stroke="#335b8e"/><path d="M732 698V711M725 704.500H739" stroke="#335b8e"/>
<path class="car" d="M743 703H747L745 706Z"/>

<text x="1148" y="708.500" textLength="98" lengthAdjust="spacingAndGlyphs" style="font-weight:bold;fill:#333">Multiple selections</text>
<rect x="0" y="718" width="1280" height="2" fill="#444"/>
</svg>
</body></html>
